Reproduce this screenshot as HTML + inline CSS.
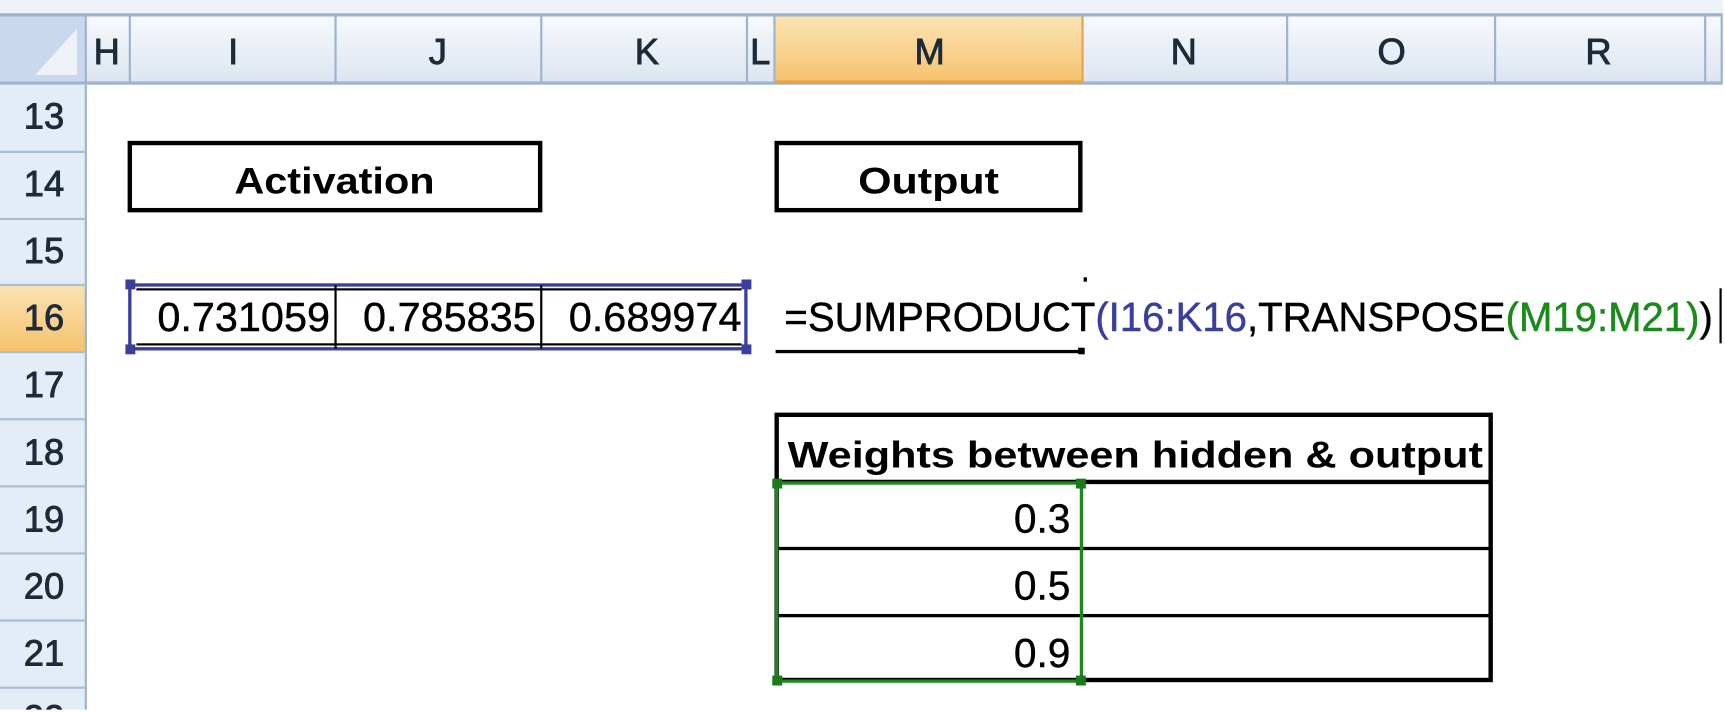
<!DOCTYPE html>
<html><head><meta charset="utf-8"><style>
html,body{margin:0;padding:0;background:#fff;width:1725px;height:713px;overflow:hidden}
svg{display:block}
text{font-family:"Liberation Sans",sans-serif}
</style></head><body>
<svg width="1725" height="713" viewBox="0 0 1568 648" preserveAspectRatio="none" xmlns="http://www.w3.org/2000/svg">
<defs>
<linearGradient id="hg" x1="0" y1="0" x2="0" y2="1"><stop offset="0" stop-color="#f7f9fc"/><stop offset="1" stop-color="#dce5f0"/></linearGradient>
<linearGradient id="og" x1="0" y1="0" x2="0" y2="1"><stop offset="0" stop-color="#fbe3b4"/><stop offset="1" stop-color="#f5c26c"/></linearGradient>
</defs>
<rect x="0" y="0" width="1566" height="14" fill="#eef3f9"/>
<rect x="0" y="12" width="1566" height="3" fill="#9db4cc"/>
<rect x="0" y="15" width="1566" height="60" fill="url(#hg)"/>
<rect x="0" y="15" width="78" height="60" fill="#c9d8ec"/>
<polygon points="70,68 70,26 32,68" fill="#eef2f7"/>
<rect x="705" y="15" width="278" height="60" fill="url(#og)"/>
<rect x="0" y="74" width="1566" height="3" fill="#9db4cc"/>
<g fill="#9db4cc">
<rect x="77" y="15" width="2" height="60"/>
<rect x="117" y="15" width="2" height="60"/>
<rect x="304" y="15" width="2" height="60"/>
<rect x="491" y="15" width="2" height="60"/>
<rect x="678" y="15" width="2" height="60"/>
<rect x="703" y="15" width="2" height="60"/>
<rect x="983" y="15" width="2" height="60" fill="#e7a446"/>
<rect x="1169" y="15" width="2" height="60"/>
<rect x="1358" y="15" width="2" height="60"/>
<rect x="1549" y="15" width="2" height="60"/>
<rect x="1564" y="15" width="2" height="60"/>
</g>
<rect x="705" y="73" width="278" height="3" fill="#e7a446"/>
<g font-size="33" fill="#1d2a3a" stroke="#1d2a3a" stroke-width="0.8" text-anchor="middle">
<text x="97" y="58">H</text>
<text x="212" y="58">I</text>
<text x="398" y="58">J</text>
<text x="588" y="58">K</text>
<text x="691" y="58">L</text>
<text x="845" y="58">M</text>
<text x="1076" y="58">N</text>
<text x="1265" y="58">O</text>
<text x="1453" y="58">R</text>
</g>
<rect x="0" y="77" width="78" height="568" fill="#e4ecf7"/>
<rect x="0" y="259" width="78" height="61" fill="url(#og)"/>
<rect x="77" y="77" width="2" height="568" fill="#9db4cc"/>
<g fill="#a9bdd3">
<rect x="0" y="137" width="78" height="2"/>
<rect x="0" y="198" width="78" height="2"/>
<rect x="0" y="258" width="78" height="2"/>
<rect x="0" y="319" width="78" height="2"/>
<rect x="0" y="380" width="78" height="2"/>
<rect x="0" y="441" width="78" height="2"/>
<rect x="0" y="502" width="78" height="2"/>
<rect x="0" y="563" width="78" height="2"/>
<rect x="0" y="624" width="78" height="2"/>
</g>
<g font-size="33" fill="#1d2a3a" stroke="#1d2a3a" stroke-width="0.8" text-anchor="middle">
<text x="40" y="117">13</text>
<text x="40" y="178">14</text>
<text x="40" y="239">15</text>
<text x="40" y="300">16</text>
<text x="40" y="361">17</text>
<text x="40" y="422">18</text>
<text x="40" y="483">19</text>
<text x="40" y="544">20</text>
<text x="40" y="605">21</text>
<text x="40" y="664">22</text>
</g>
<rect x="0" y="645" width="1568" height="10" fill="#fff"/>
<rect x="118" y="130" width="373" height="61" fill="none" stroke="#000" stroke-width="4"/>
<text x="304" y="176" font-size="34" font-weight="bold" text-anchor="middle" textLength="182" lengthAdjust="spacingAndGlyphs">Activation</text>
<rect x="706" y="130" width="276" height="61" fill="none" stroke="#000" stroke-width="4"/>
<text x="844" y="176" font-size="34" font-weight="bold" text-anchor="middle" textLength="128" lengthAdjust="spacingAndGlyphs">Output</text>
<rect x="118" y="259" width="560" height="58" fill="none" stroke="#3a3f9e" stroke-width="3"/>
<rect x="304" y="259" width="2" height="58" fill="#000"/>
<rect x="491" y="259" width="2" height="58" fill="#000"/>
<rect x="124" y="262" width="550" height="2" fill="#000"/>
<rect x="124" y="312" width="550" height="2" fill="#000"/>
<g fill="#3a3f9e">
<rect x="114" y="254" width="9" height="9"/><rect x="674" y="254" width="9" height="9"/>
<rect x="114" y="313" width="9" height="9"/><rect x="674" y="313" width="9" height="9"/>
</g>
<g font-size="37" fill="#000" stroke="#000" stroke-width="0.4">
<text x="143" y="301" textLength="157" lengthAdjust="spacingAndGlyphs">0.731059</text>
<text x="330" y="301" textLength="157" lengthAdjust="spacingAndGlyphs">0.785835</text>
<text x="517" y="301" textLength="157" lengthAdjust="spacingAndGlyphs">0.689974</text>
</g>
<rect x="705" y="318" width="280" height="3" fill="#000"/>
<rect x="980" y="316" width="6" height="6" fill="#000"/>
<rect x="985" y="252" width="3" height="4" fill="#000"/>
<text x="713" y="301" font-size="37" stroke-width="0.4" textLength="844" lengthAdjust="spacingAndGlyphs"><tspan fill="#000" stroke="#000">=SUMPRODUCT</tspan><tspan fill="#3a3f9e" stroke="#3a3f9e">(I16:K16</tspan><tspan fill="#000" stroke="#000">,TRANSPOSE</tspan><tspan fill="#1a8a1a" stroke="#1a8a1a">(M19:M21)</tspan><tspan fill="#000" stroke="#000">)</tspan></text>
<rect x="1563" y="262" width="2" height="50" fill="#000"/>
<rect x="706" y="377" width="649" height="241" fill="none" stroke="#000" stroke-width="4"/>
<rect x="706" y="436" width="649" height="4" fill="#000"/>
<rect x="706" y="497" width="649" height="3" fill="#000"/>
<rect x="706" y="558" width="649" height="3" fill="#000"/>
<text x="716" y="425" font-size="34" font-weight="bold" textLength="632" lengthAdjust="spacingAndGlyphs">Weights between hidden &amp; output</text>
<rect x="706" y="439" width="277" height="180" fill="none" stroke="#1a8a1a" stroke-width="3"/>
<g fill="#1a7a1a">
<rect x="702" y="435" width="9" height="9"/><rect x="978" y="435" width="9" height="9"/>
<rect x="702" y="614" width="9" height="9"/><rect x="978" y="614" width="9" height="9"/>
</g>
<g font-size="37" fill="#000" stroke="#000" stroke-width="0.4" text-anchor="end">
<text x="973" y="484">0.3</text>
<text x="973" y="545">0.5</text>
<text x="973" y="606">0.9</text>
</g>
</svg>
</body></html>
